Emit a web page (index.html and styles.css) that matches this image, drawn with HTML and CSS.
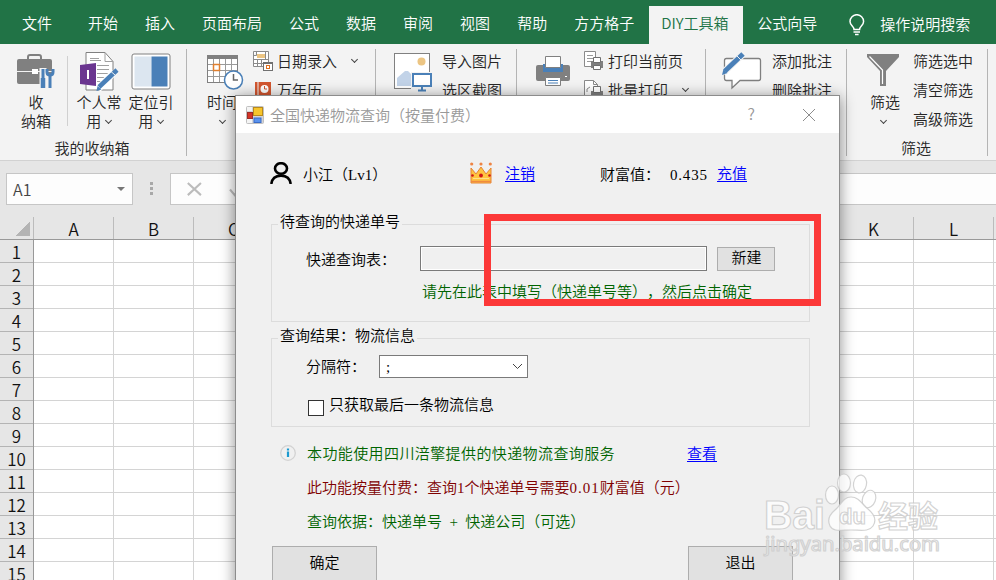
FILE: index.html
```html
<!DOCTYPE html>
<html lang="zh-CN">

<head>
  <meta charset="UTF-8" />
  <meta name="viewport" content="width=device-width, initial-scale=1.0" />
  <title>全国快递物流查询</title>
  <link rel="stylesheet" href="styles.css">
</head>

<body>
  <!-- 选项卡 -->
  <div class="tabs">
    <span class="tab file">文件</span>
    <span class="tab">开始</span>
    <span class="tab">插入</span>
    <span class="tab">页面布局</span>
    <span class="tab">公式</span>
    <span class="tab">数据</span>
    <span class="tab">审阅</span>
    <span class="tab">视图</span>
    <span class="tab">帮助</span>
    <span class="tab">方方格子</span>
    <span class="tab on">DIY工具箱</span>
    <span class="tab">公式向导</span>
    <svg class="bulb" width="16" height="22" viewBox="0 0 16 22" fill="none" stroke="#fff" stroke-width="1.5">
      <path d="M5 15.500C5 12.500 1 11.500 1 7.500a6.800 6.800 0 0 1 13.600 0C14.600 11.500 10.600 12.500 10.600 15.500ZM4.500 18h6.500M6 20.500h3.600" />
    </svg>
    <span class="search">操作说明搜索</span>
  </div>

  <!-- 功能区 -->
  <div class="ribbon">
    <div class="group g1">
      <div class="items">
        <div class="big">
          <svg width="40" height="38" viewBox="-1 0 40 38">
            <path d="M11 6V4q0-2 2-2h9q2 0 2 2v2" fill="none" stroke="#808080" stroke-width="2" />
            <rect x="0" y="6" width="35" height="25" rx="2" fill="#808080" />
            <path d="M0 18.500h35" stroke="#f3f3f3" />
            <rect x="15" y="16" width="6" height="5" fill="#fff" />
            <path d="M26 15v21M33 22v14" stroke="#f3f3f3" stroke-width="7" />
            <path d="M26 16v9M33 22v13" stroke="#4a80b8" stroke-width="3" />
            <path d="M26 25v10" stroke="#4a80b8" stroke-width="4.500" />
            <path d="M30 16v3q0 3 3 3t3-3v-3" fill="none" stroke="#4a80b8" stroke-width="3" />
          </svg>
          <p>收<br>纳箱</p>
        </div>
        <i class="line"></i>
        <div class="big">
          <svg width="40" height="40" viewBox="0 0 40 40">
            <path d="M7 .500h19l8 9V38H7Z" fill="#fff" stroke="#808080" />
            <path d="M26 .500v9h8M11 6.500h9M11 8.500h11M18 13.500h12M18 17.500h12M18 21.500h12M18 25.500h12M18 29.500h8" fill="none" stroke="#a0a0a0" />
            <path d="M1 13l16-2v23L1 32Z" fill="#6b3690" />
            <path d="M9 18v9" stroke="#fff" stroke-width="2" />
            <path d="M19 37l16-17" stroke="#fff" stroke-width="7" />
            <path d="M20 35L38 18" stroke="#4a80b8" stroke-width="4.500" />
            <path d="M17.500 39l1-5 4 3.500Z" fill="#4a80b8" />
            <path d="M32 19.500l4.500 4" stroke="#f3f3f3" />
          </svg>
          <p>个人常<br>用 <b class="arrow"></b></p>
        </div>
        <div class="big">
          <svg width="40" height="38" viewBox="0 0 40 38">
            <rect x="1" y="1" width="38" height="35" rx="2" fill="#fff" stroke="#808080" />
            <rect x="3.500" y="3.500" width="17" height="30" fill="#dce6f0" />
            <rect x="20.500" y="3.500" width="16" height="30" fill="#4a80b8" />
          </svg>
          <p>定位引<br>用 <b class="arrow"></b></p>
        </div>
      </div>
      <div class="title">我的收纳箱</div>
    </div>

    <div class="group g2">
      <div class="items">
        <div class="big">
          <svg width="38" height="36" viewBox="0 0 38 36">
            <rect x="1.500" y="1.500" width="30" height="27" fill="#fff" stroke="#808080" />
            <path d="M1 3h31" stroke="#808080" stroke-width="4" />
            <path d="M7.500 5v23M13.500 5v23M19.500 5v23M25.500 5v23M2 10.500h29M2 16.500h29M2 22.500h29" stroke="#9a9a9a" />
            <rect x="7.500" y="10.500" width="6" height="6" fill="#fff" stroke="#e08030" stroke-width="1.500" />
            <circle cx="27.500" cy="26" r="9" fill="#fff" stroke="#4a80b8" stroke-width="1.500" />
            <path d="M27.500 20v6H32" fill="none" stroke="#666" stroke-width="1.500" />
          </svg>
          <p>时间<br><b class="arrow"></b></p>
        </div>
        <ul class="small">
          <li>
            <svg width="20" height="20" viewBox="0 0 20 20">
              <path d="M.500.500h15v15H.500ZM.500 4.500h3v-4M.500 8.500h15M.500 12.500h15M4.500 8v7M8.500 8v7M12.500.500v8" fill="#fff" stroke="#8a8a8a" />
              <rect x="4" y="3" width="8" height="4" fill="#ecc583" />
              <rect x="10.500" y="11.500" width="9" height="8" fill="#fff" stroke="#707070" />
              <path d="M10 12h10" stroke="#707070" stroke-width="2" />
              <rect x="13.500" y="14.500" width="3" height="3" fill="#fff" stroke="#e07020" />
            </svg>
            日期录入 <b class="arrow"></b>
          </li>
          <li>
            <svg width="20" height="20" viewBox="0 0 20 20">
              <path d="M2 2h16v17H2Z" fill="#d2562f" />
              <path d="M5 2v17" stroke="#f3f3f3" />
              <circle cx="11.500" cy="9" r="4" fill="#fff" />
              <path d="M11.500 6v3H14" fill="none" stroke="#d2562f" />
            </svg>
            万年历
          </li>
        </ul>
      </div>
    </div>

    <div class="group g3">
      <div class="items">
        <div class="big">
          <svg width="40" height="40" viewBox="0 0 40 40">
            <rect x="1.500" y="1.500" width="35" height="35" fill="#fff" stroke="#808080" />
            <circle cx="28.500" cy="9.500" r="4" fill="#ecc583" />
            <path d="M4 34v-8l8-7h3l9 9v6Z" fill="#c2d3e8" />
            <path d="M18 20h22v19H18Z" fill="#f3f3f3" />
            <rect x="20" y="22" width="18" height="12" fill="#fff" stroke="#4a80b8" stroke-width="2" />
            <path d="M29 34v4M25 38.500h8" stroke="#4a80b8" stroke-width="2" />
          </svg>
        </div>
        <ul class="small">
          <li>导入图片</li>
          <li>选区截图</li>
        </ul>
      </div>
    </div>

    <div class="group g4">
      <div class="items">
        <div class="big">
          <svg width="34" height="32" viewBox="0 0 34 32">
            <rect y="9" width="34" height="16" rx="2" fill="#808080" />
            <path d="M7 8h20v8H7Z" fill="#4a80b8" />
            <path d="M9.500.500h15v11h-15ZM9.500 21.500h15v8h-15Z" fill="#fff" stroke="#808080" />
            <path d="M12 24.500h10M12 27h10" stroke="#4a80b8" />
            <path d="M29 20.500h2" stroke="#fff" />
          </svg>
        </div>
        <ul class="small">
          <li>
            <svg width="20" height="20" viewBox="0 0 20 20">
              <path d="M.500.500h11v15H.500Z" fill="#fff" stroke="#8a8a8a" />
              <path d="M3 4.500h6M3 7.500h6M3 10.500h4" stroke="#9a9a9a" />
              <rect x="7" y="10" width="12" height="7" fill="#808080" />
              <path d="M9.500 6.500h7v5h-7ZM9.500 14.500h7v4h-7Z" fill="#fff" stroke="#707070" />
            </svg>
            打印当前页
          </li>
          <li>
            <svg width="20" height="20" viewBox="0 0 20 20">
              <path d="M.500.500h9l4 4v14H.500Z" fill="#fff" stroke="#8a8a8a" />
              <path d="M9.500.500v4h4M3 12v-3l3-2" fill="none" stroke="#8a8a8a" />
              <rect x="7" y="11" width="12" height="7" fill="#808080" />
              <path d="M9.500 6.500h7v6h-7Z" fill="#fff" stroke="#707070" />
            </svg>
            批量打印 <b class="arrow"></b>
          </li>
        </ul>
      </div>
    </div>

    <div class="group g5">
      <div class="items">
        <div class="big">
          <svg width="40" height="40" viewBox="0 0 40 40">
            <path d="M4.500 6.500h32q2 0 2 2v18q0 2-2 2H18L10 36v-7.500H4.500q-2 0-2-2V8.500q0-2 2-2Z" fill="#fff" stroke="#808080" stroke-width="1.300" />
            <path d="M1 21L21 2" stroke="#f3f3f3" stroke-width="7" />
            <path d="M3 19L21 2" stroke="#4a80b8" stroke-width="5" />
            <path d="M0 23l1.500-6 4 4Z" fill="#4a80b8" />
            <path d="M15 4l4 4" stroke="#f3f3f3" />
          </svg>
        </div>
        <ul class="small">
          <li>添加批注</li>
          <li>删除批注</li>
        </ul>
      </div>
    </div>

    <div class="group g6">
      <div class="items">
        <div class="big">
          <svg width="32" height="36" viewBox="0 0 32 36">
            <path d="M0 0h32v3L19 17v15h-6V17L0 3Z" fill="#808080" />
            <path d="M2.500 2.500L15.500 16v14" fill="none" stroke="#fff" stroke-width="1.200" />
          </svg>
          <p><span class="shift">筛选</span><br><b class="arrow"></b></p>
        </div>
        <ul class="small">
          <li>筛选选中</li>
          <li>清空筛选</li>
          <li>高级筛选</li>
        </ul>
      </div>
      <div class="title">筛选</div>
    </div>
  </div>

  <!-- 编辑栏 -->
  <div class="formula">
    <div class="name-box">A1 <i class="down"></i></div>
    <div class="dots"><i></i><i></i><i></i></div>
    <div class="fx">
      <svg width="60" height="15" viewBox="0 0 60 16" fill="none" stroke="#bcbcbc" stroke-width="2.200">
        <path d="M1 1l14 13M15 1L1 14M46 8l5 6L60 1" />
      </svg>
    </div>
  </div>

  <!-- 表格 -->
  <div class="cols">
    <span class="corner"></span>
    <span>A</span><span>B</span><span>C</span><span>D</span><span>E</span><span>F</span>
    <span>G</span><span>H</span><span>I</span><span>J</span><span>K</span><span>L</span>
  </div>
  <div class="sheet">
    <div class="rows">
      <span>1</span><span>2</span><span>3</span><span>4</span><span>5</span>
      <span>6</span><span>7</span><span>8</span><span>9</span><span>10</span>
      <span>11</span><span>12</span><span>13</span><span>14</span><span>15</span>
    </div>
    <div class="cells"></div>
  </div>

  <!-- 对话框 -->
  <div class="dialog">
    <div class="dialog-title">
      <svg width="18" height="18" viewBox="0 0 18 18">
        <rect x=".500" y=".500" width="17" height="17" rx="1" fill="#d4d4d8" stroke="#c0c0c0" />
        <path d="M1 1h5v4H1ZM1 13h5v4H1Z" fill="#f4f4f4" />
        <rect x="7.500" y="1.500" width="9" height="8" fill="#f7c52c" stroke="#b98a1c" />
        <rect x="1.500" y="6.500" width="5" height="6" fill="#d53326" stroke="#9c2d28" />
        <rect x="8" y="12" width="7" height="4.500" fill="#5a93ee" stroke="#3a6cc8" />
      </svg>
      <span class="caption">全国快递物流查询（按量付费）</span>
      <span class="help">?</span>
      <svg width="14" height="14" viewBox="0 0 14 14" stroke="#8c8c8c"><path d="M1 1l12 12M13 1L1 13" /></svg>
    </div>

    <div class="user">
      <svg width="22" height="22" viewBox="0 0 22 22" fill="none" stroke="#000" stroke-width="2.600">
        <ellipse cx="11" cy="6.500" rx="6" ry="5.300" />
        <path d="M1.300 22C2 16.500 6 13.800 11 13.800S20 16.500 20.700 22" />
      </svg>
      <span class="nick">小江（<em>Lv1</em>）</span>
      <svg width="22" height="22" viewBox="0 0 22 22">
        <path d="M1 6l5 6 5-7 5 7 5-6v15H1Z" fill="#ffc440" stroke="#e58436" />
        <path d="M1 19.500h20" stroke="#f08a40" stroke-width="1.500" />
        <path d="M3 16.500h16" stroke="#ffe08a" />
        <g fill="#ee8444"><circle cx="1.700" cy="2" r="1.600" /><circle cx="11" cy="2" r="1.600" /><circle cx="20.300" cy="2" r="1.600" /></g>
        <g fill="#cf1717"><circle cx="11" cy="13.500" r="1.900" /><circle cx="2.500" cy="13.500" r="1.300" /><circle cx="19.500" cy="13.500" r="1.300" /></g>
      </svg>
      <a class="link">注销</a>
      <span class="wealth">财富值：<em>0.435</em></span>
      <a class="link">充值</a>
    </div>

    <fieldset class="box box1">
      <legend>待查询的快递单号</legend>
      <div class="field">
        <label>快递查询表：</label>
        <div class="input"></div>
        <div class="btn new">新建</div>
      </div>
      <p class="tip">请先在此表中填写（快递单号等），然后点击确定</p>
    </fieldset>

    <fieldset class="box box2">
      <legend>查询结果：物流信息</legend>
      <div class="field">
        <label>分隔符：</label>
        <div class="select">;
          <svg width="11" height="7" viewBox="0 0 11 7" fill="none" stroke="#444"><path d="M1 1l4.500 4.500L10 1" /></svg>
        </div>
      </div>
      <div class="check"><i></i>只获取最后一条物流信息</div>
    </fieldset>

    <div class="notes">
      <div class="note">
        <svg width="16" height="16" viewBox="0 0 16 16">
          <circle cx="8" cy="8" r="7.300" fill="#f0f0f0" stroke="#d2d2d2" stroke-width="1.300" />
          <path d="M8 3.500v2M8 6.500v5.500" stroke="#1c9ad0" stroke-width="2.200" />
        </svg>
        <span class="service">本功能使用四川涪擎提供的快递物流查询服务</span>
        <a class="link">查看</a>
      </div>
      <p class="note red">此功能按量付费：查询1个快递单号需要<em>0.01</em>财富值（元）</p>
      <p class="note">查询依据：快递单号 + 快递公司（可选）</p>
    </div>

    <div class="actions">
      <div class="btn">确定</div>
      <div class="btn">退出</div>
    </div>
  </div>

  <!-- 红色标注框 -->
  <div class="mark"></div>

  <!-- 水印 -->
  <svg class="watermark" width="190" height="90" viewBox="0 0 190 90">
    <g fill="#fff" fill-opacity=".75" stroke="#c8c8c8" stroke-opacity=".8" stroke-width="1.200">
      <text class="wm-logo" x="2" y="59" textLength="61" lengthAdjust="spacingAndGlyphs">Bai</text>
      <ellipse cx="70" cy="25" rx="6.500" ry="9" />
      <ellipse cx="82" cy="13" rx="6.500" ry="9" />
      <ellipse cx="98" cy="14" rx="6.500" ry="9" transform="rotate(10 98 14)" />
      <ellipse cx="107" cy="29" rx="6.500" ry="9" transform="rotate(20 107 29)" />
      <path d="M89 27c-8 0-10 8-16 13s-8 10-5 16 11 4 21 4 18 2 22-4 1-12-5-17-9-12-17-12Z" />
      <text class="wm-du" x="77" y="54">du</text>
      <text class="wm-cn" x="116" y="57">经验</text>
      <text class="wm-url" x="3" y="81" textLength="175" lengthAdjust="spacingAndGlyphs">jingyan.baidu.com</text>
    </g>
  </svg>
</body>

</html>
```

FILE: styles.css
```css
* {
  box-sizing: border-box;
}

body {
  position: relative;
  width: 996px;
  height: 580px;
  margin: 0;
  overflow: hidden;
  background: #fff;
  color: #262626;
  font: 350 15px/19px "Noto Sans CJK SC", sans-serif;
  text-spacing-trim: space-all;
}

p,
ul {
  margin: 0;
  padding: 0;
  list-style: none;
}

em {
  font-style: normal;
}

svg {
  display: block;
  flex: none;
}

/* 选项卡 */
.tabs {
  display: flex;
  height: 44px;
  padding-left: 10px;
  background: #217346;
  color: #fff;
  white-space: nowrap;
}

.tab {
  margin: 6px 3px 0 0;
  padding: 0 12px;
  line-height: 33px;
}

.tabs .file {
  margin-right: 12px;
}

.tabs .on {
  width: 94px;
  background: #f3f3f3;
  color: #217346;
}

.tabs .on + .tab {
  margin-left: -1px;
}

.bulb {
  margin: 14px 15px 0 17px;
}

.search {
  margin-top: 6px;
  line-height: 35px;
}

/* 功能区 */
.ribbon {
  display: flex;
  height: 117px;
  background: #f3f3f3;
  border-bottom: 1px solid #d2d2d2;
}

.group {
  flex: none;
  height: 107px;
  margin-top: 5px;
  border-right: 1px solid #b4b4b4;
}

.items {
  display: flex;
  height: 91px;
}

.title {
  padding-right: 2px;
  line-height: 16px;
  text-align: center;
}

.big {
  flex: none;
  padding-top: 3px;
  text-align: center;
}

.big svg {
  height: 40px;
  margin: 0 auto;
}

.line {
  height: 70px;
  margin-top: 7px;
  border-right: 1px solid #d0d0d0;
}

.small {
  margin-top: -3px;
}

.small li {
  display: flex;
  align-items: center;
  gap: 4px;
  height: 29px;
  white-space: nowrap;
}

/* 下拉小箭头 */
.arrow {
  display: inline-block;
  width: 5px;
  height: 5px;
  margin: 0 1px 4px 1px;
  border: solid #444;
  border-width: 0 1px 1px 0;
  transform: rotate(45deg);
}

.small .arrow {
  margin: 0 0 3px 11px;
}

.g1 {
  width: 187px;
}

.g1 .items {
  padding-left: 5px;
}

.g1 .big:nth-child(1),
.g1 .big:nth-child(3) {
  width: 62px;
}

.g1 .big:nth-child(4) {
  width: 42px;
}

.g1 .big:nth-child(4) p {
  width: 46px;
  margin-left: -2px;
}

.g2 {
  width: 189px;
}

.g2 .items {
  padding-left: 17px;
}

.g2 .big {
  width: 49px;
}

.g2 .big svg {
  margin-left: 2px;
}

.g2 .big p {
  width: 36px;
}

.g3 {
  width: 141px;
}

.g3 .items {
  padding-left: 17px;
}

.g3 .big {
  width: 49px;
}

.g3 .big svg,
.g4 .big svg,
.g5 .big svg {
  margin-left: 0;
}

.g4 {
  width: 189px;
}

.g4 .items {
  padding-left: 19px;
}

.g4 .big {
  width: 48px;
}

.g5 {
  width: 141px;
}

.g5 .items {
  padding-left: 16px;
}

.g5 .big {
  width: 50px;
}

.g6 {
  width: 141px;
}

.g6 .items {
  padding-left: 20px;
}

.g6 .big {
  width: 32px;
  margin-right: 14px;
}

.shift {
  margin-right: -4px;
  white-space: nowrap;
}

/* 编辑栏 */
.formula {
  display: flex;
  height: 56px;
  padding-top: 12px;
  padding-left: 6px;
  background: #e6e6e6;
}

.name-box {
  display: flex;
  justify-content: space-between;
  align-items: center;
  width: 127px;
  height: 32px;
  padding: 0 7px 0 6px;
  border: 1px solid #c6c6c6;
  background: #fdfdfd;
  color: #444;
  font-size: 16px;
}

.down {
  border: 4px solid transparent;
  border-top-color: #777;
  border-bottom: 0;
}

.dots {
  display: flex;
  flex-direction: column;
  gap: 2px;
  margin: 9px 17px 0 17px;
}

.dots i {
  width: 3px;
  height: 3px;
  background: #a8a8a8;
}

.fx {
  flex: 1;
  height: 32px;
  padding: 8px 0 0 14px;
  border: 1px solid #c6c6c6;
  border-right: 0;
  background: #fdfdfd;
}

/* 列标 */
.cols {
  display: flex;
  height: 23px;
  background: #e6e6e6;
  border-bottom: 1px solid #999;
  color: #111;
  font-size: 17px;
  line-height: 23px;
  text-align: center;
}

.cols span {
  flex: none;
  width: 80px;
  border-right: 1px solid #bcbcbc;
}

.cols .corner {
  width: 34px;
  background: linear-gradient(135deg, transparent 50%, #b4b4b4 50%) 15px 4px / 15px 15px no-repeat;
}

/* 行号和单元格 */
.sheet {
  display: flex;
  height: 345px;
}

.rows {
  width: 34px;
  background: #e6e6e6;
  border-right: 1px solid #999;
  color: #111;
  font-size: 17px;
  line-height: 24px;
  text-align: center;
}

.rows span {
  display: block;
  height: 23px;
  border-bottom: 1px solid #b4b4b4;
}

.cells {
  flex: 1;
  background:
    repeating-linear-gradient(to right, transparent 0 79px, #d4d4d4 79px 80px),
    repeating-linear-gradient(to bottom, transparent 0 22px, #d4d4d4 22px 23px);
}

/* 对话框 */
.dialog {
  position: absolute;
  left: 235px;
  top: 95px;
  width: 605px;
  height: 510px;
  border: 1px solid #8c8c8c;
  background: #f0f0f0;
  box-shadow: 0 2px 14px rgba(0, 0, 0, 0.45);
  color: #000;
  font-family: "Liberation Serif", "Noto Sans CJK SC", serif;
  line-height: 20px;
  white-space: nowrap;
}

.dialog-title {
  display: flex;
  align-items: center;
  height: 37px;
  padding: 0 23px 0 10px;
  background: #fff;
  color: #999;
  font-family: "Noto Sans CJK SC", sans-serif;
}

.caption {
  flex: 1;
  margin-left: 6px;
}

.help {
  margin: -3px 47px 0 0;
  font-size: 16px;
}

.link {
  color: #00f;
  text-decoration: underline;
  text-underline-offset: 2px;
}

/* 用户信息 */
.user {
  display: grid;
  grid-template-columns: 33px 167px 35px 95px 117px auto;
  align-items: center;
  height: 26px;
  margin: 28px 0 0 34px;
}

.user svg {
  margin-bottom: 3px;
}

.nick {
  padding-top: 1px;
}

.wealth {
  padding-top: 2px;
}

.wealth em {
  margin-left: 10px;
  letter-spacing: 0.8px;
}

/* 分组框 */
.box {
  width: 539px;
  min-width: 0;
  margin: 27px 0 0 35px;
  padding: 0 0 0 6px;
  border: 1px solid #dcdcdc;
}

.box legend {
  height: 20px;
  padding: 0 2px;
  line-height: 17px;
}

.box1 {
  height: 108px;
}

.box2 {
  height: 99px;
  margin-top: 6px;
}

.field {
  display: flex;
  height: 37px;
  padding: 12px 0 0 28px;
}

.field label {
  width: 114px;
  line-height: 29px;
}

.input {
  width: 287px;
  height: 25px;
  margin-right: 10px;
  border: 1px solid #7a7a7a;
  box-shadow: inset 0 0 0 1px #fff;
}

.btn {
  border: 1px solid #adadad;
  background: #e1e1e1;
  text-align: center;
}

.new {
  width: 58px;
  height: 24px;
  margin-top: 1px;
  padding-left: 1px;
  line-height: 20px;
}

.tip {
  margin: 11px 0 0 144px;
  color: #006400;
}

.box2 .field {
  height: 30px;
  padding-top: 7px;
}

.box2 label {
  width: 73px;
  line-height: 25px;
}

.select {
  display: flex;
  align-items: center;
  justify-content: space-between;
  width: 149px;
  height: 23px;
  padding: 0 4px 0 6px;
  border: 1px solid #7a7a7a;
  background: #fff;
}

.check {
  display: flex;
  gap: 5px;
  margin: 17px 0 0 30px;
}

.check i {
  width: 16px;
  height: 16px;
  margin-top: 5px;
  border: 1px solid #333;
  background: #fff;
}

/* 说明文字 */
.notes {
  display: flex;
  flex-direction: column;
  gap: 14px;
  margin: 17px 0 0 71px;
  color: #006400;
}

.note {
  display: flex;
  height: 20px;
  white-space: pre;
  word-spacing: 3.7px;
}

.note svg {
  margin: 1px 11px 0 -27px;
}

.note em {
  letter-spacing: 1px;
}

.service {
  width: 380px;
  letter-spacing: 0.4px;
}

.red {
  color: #800000;
}

/* 底部按钮 */
.actions {
  display: flex;
  gap: 311px;
  margin: 14px 0 0 36px;
}

.actions .btn {
  width: 105px;
  height: 36px;
  line-height: 32px;
}

/* 红色标注框 */
.mark {
  position: absolute;
  left: 484px;
  top: 214px;
  width: 337px;
  height: 92px;
  border: 7px solid #fc3838;
}

/* 水印 */
.watermark {
  position: absolute;
  left: 762px;
  top: 470px;
  font-family: "Liberation Sans", "Noto Sans CJK SC", sans-serif;
  font-weight: bold;
}

.wm-logo {
  font-size: 40px;
}

.wm-du {
  font-size: 22px;
}

.wm-cn {
  font-size: 30px;
}

.wm-url {
  font-family: "Noto Sans", sans-serif;
  font-size: 19px;
  font-weight: normal;
}
```
